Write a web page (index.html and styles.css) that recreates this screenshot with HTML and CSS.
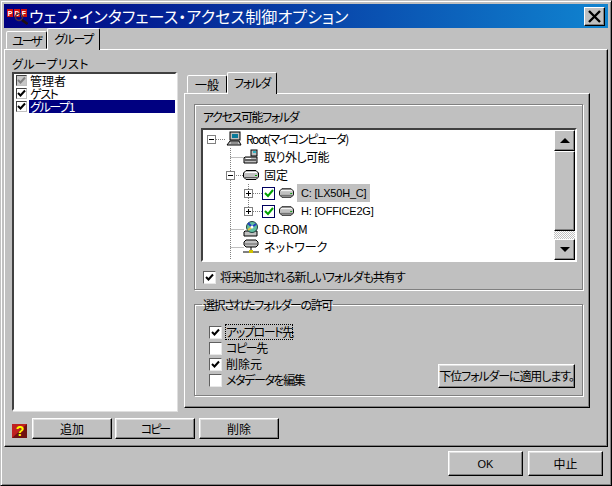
FILE: index.html
```html
<!DOCTYPE html>
<html lang="ja">
<head>
<meta charset="utf-8">
<title>ウェブ・インタフェース・アクセス制御オプション</title>
<link rel="stylesheet" href="styles.css">
</head>
<body>
<svg class="defs" width="0" height="0" aria-hidden="true">
  <symbol id="drive" viewBox="0 0 16 12">
    <path d="M3 1.500h10l2.500 2.500v4L13 10.500H3L.5 8V4z" fill="#c0c0c0" stroke="#000"/>
    <path d="M2 3.500h12" stroke="#fff"/>
    <path d="M2 8.500h12" stroke="#606060"/>
    <rect x="12" y="6" width="2" height="1" fill="#00a000"/>
  </symbol>
</svg>
<div class="window">
  <header class="titlebar">
    <svg class="logo" width="21" height="17" viewBox="0 0 21 17">
      <rect x="0" y="1" width="6" height="8" fill="#d01010"/>
      <rect x="7" y="1" width="6" height="8" fill="#d01010"/>
      <rect x="14" y="1" width="6" height="8" fill="#d01010"/>
      <text x="3" y="8" class="logo-t">P</text>
      <text x="10" y="8" class="logo-t">D</text>
      <text x="17" y="8" class="logo-t">F</text>
      <circle cx="12" cy="9" r="3.500" fill="none" stroke="#503040" stroke-width="1.500"/>
      <path d="M15 12l5.500 4" stroke="#201010" stroke-width="2.500"/>
    </svg>
    <span class="title-text">ウェブ・インタフェース・アクセス制御オプション</span>
    <button class="close" aria-label="閉じる">
      <svg width="13" height="13" viewBox="0 0 13 13"><path d="M1 1l11 11M12 1L1 12" stroke="#000" stroke-width="2.400"/></svg>
    </button>
  </header>

  <nav class="tabs outer-tabs">
    <span class="tab"><span class="ls-20">ユーザ</span></span>
    <span class="tab active"><span class="ls-15">グループ</span></span>
  </nav>

  <section class="pane outer-pane">
    <div class="columns">
      <div class="list-col">
        <div class="list-label">グループリスト</div>
        <ul class="listbox">
          <li class="list-row"><span class="lcheck grey"><svg width="9" height="9" viewBox="0 0 9 9"><path d="M1 4l2.500 2.500L8 1.500" fill="none" stroke="#808080" stroke-width="2"/></svg></span><span class="list-text">管理者</span></li>
          <li class="list-row"><span class="lcheck"><svg width="9" height="9" viewBox="0 0 9 9"><path d="M1 4l2.500 2.500L8 1.500" fill="none" stroke="#000" stroke-width="2"/></svg></span><span class="list-text ls-15">ゲスト</span></li>
          <li class="list-row"><span class="lcheck"><svg width="9" height="9" viewBox="0 0 9 9"><path d="M1 4l2.500 2.500L8 1.500" fill="none" stroke="#000" stroke-width="2"/></svg></span><span class="list-text selected ls-15">グループ1</span></li>
        </ul>
      </div>

      <div class="detail-col">
        <nav class="tabs inner-tabs">
          <span class="tab">一般</span>
          <span class="tab active"><span class="ls-15">フォルダ</span></span>
        </nav>
        <div class="pane inner-pane">
          <div class="group">
            <div class="group-label ls-15">アクセス可能フォルダ</div>
            <div class="treebox">
              <div class="tree">
                <svg class="connectors" width="351" height="130" viewBox="0 0 351 130">
                  <path d="M13 9.500h10M27.500 18v112M27.500 27.500h13M31 45.500h9M27.500 99.500h13M27.500 117.500h13M45.500 54v27M50 63.500h9M50 81.500h9" fill="none" stroke="#808080" stroke-dasharray="1 1"/>
                </svg>
                <div class="row lv0">
                  <span class="exp minus"></span>
                  <svg class="ico" width="16" height="16" viewBox="0 0 16 16">
                    <rect x="4" y="1" width="10" height="8" fill="#c0c0c0" stroke="#000"/>
                    <rect x="6" y="3" width="6" height="4" fill="#0a7a9a"/>
                    <path d="M1 14l3-4h9l2 4z" fill="#c0c0c0" stroke="#000"/>
                    <path d="M5 12h7" stroke="#606060"/>
                  </svg>
                  <span class="node-text ls-15">Root(マイコンピュータ)</span>
                </div>
                <div class="row lv1 noexp">
                  <svg class="ico" width="16" height="16" viewBox="0 0 16 16">
                    <rect x="8" y="1" width="6" height="6" fill="#c0c0c0" stroke="#000"/>
                    <rect x="10" y="2" width="3" height="2" fill="#30b0c0"/>
                    <path d="M2 8h12v6H1V9z" fill="#c0c0c0" stroke="#000"/>
                    <path d="M2 11h11" stroke="#000"/>
                    <rect x="3" y="9" width="5" height="1" fill="#fff"/>
                  </svg>
                  <span class="node-text ls-05">取り外し可能</span>
                </div>
                <div class="row lv1">
                  <span class="exp minus"></span>
                  <svg class="ico" width="16" height="12" viewBox="0 0 16 12"><use href="#drive"/></svg>
                  <span class="node-text">固定</span>
                </div>
                <div class="row lv2">
                  <span class="exp plus"></span>
                  <span class="tcheck"><svg width="10" height="9" viewBox="0 0 10 9"><path d="M1 4l3 3 5-6" fill="none" stroke="#00a000" stroke-width="2"/></svg></span>
                  <svg class="ico" width="15" height="12" viewBox="0 0 16 12"><use href="#drive"/></svg>
                  <span class="node-text drive selected-grey">C: [LX50H_C]</span>
                </div>
                <div class="row lv2">
                  <span class="exp plus"></span>
                  <span class="tcheck"><svg width="10" height="9" viewBox="0 0 10 9"><path d="M1 4l3 3 5-6" fill="none" stroke="#00a000" stroke-width="2"/></svg></span>
                  <svg class="ico" width="15" height="12" viewBox="0 0 16 12"><use href="#drive"/></svg>
                  <span class="node-text drive">H: [OFFICE2G]</span>
                </div>
                <div class="row lv1 noexp">
                  <svg class="ico" width="16" height="16" viewBox="0 0 16 16">
                    <path d="M2 10h12v5H1v-4z" fill="#c0c0c0" stroke="#000"/>
                    <circle cx="9" cy="6" r="5.500" fill="#60c0a0" stroke="#204040"/>
                    <path d="M9 6L5 2M9 6l4-3" stroke="#2040c0" stroke-width="2"/>
                    <path d="M9 6l-4 3" stroke="#e0c040" stroke-width="2"/>
                    <circle cx="9" cy="6" r="1.500" fill="#fff"/>
                  </svg>
                  <span class="node-text ls-05">CD-ROM</span>
                </div>
                <div class="row lv1 noexp">
                  <svg class="ico" width="16" height="16" viewBox="0 0 16 16">
                    <path d="M3 1h10l2 2v3l-2 2H3L1 6V3z" fill="#c0c0c0" stroke="#000"/>
                    <path d="M2 5h12" stroke="#606060"/>
                    <path d="M8 8v4M0 13h16" stroke="#000"/>
                    <rect x="6" y="11" width="4" height="3" fill="#d0c000"/>
                  </svg>
                  <span class="node-text">ネットワーク</span>
                </div>
              </div>
              <div class="scrollbar">
                <button class="sb-btn" aria-label="上"><span class="arrow up"></span></button>
                <div class="sb-thumb"></div>
                <div class="sb-track"></div>
                <button class="sb-btn" aria-label="下"><span class="arrow down"></span></button>
              </div>
            </div>
            <label class="check share">
              <span class="box"><svg width="9" height="9" viewBox="0 0 9 9"><path d="M1 4l2.500 2.500L8 1.500" fill="none" stroke="#000" stroke-width="2"/></svg></span>
              <span class="ls-10">将来追加される新しいフォルダも共有す</span>
            </label>
          </div>

          <fieldset class="perm">
            <legend class="ls-15">選択されたフォルダーの許可</legend>
            <div class="perm-body">
              <div class="perm-list">
                <label class="check">
                  <span class="box"><svg width="9" height="9" viewBox="0 0 9 9"><path d="M1 4l2.500 2.500L8 1.500" fill="none" stroke="#000" stroke-width="2"/></svg></span>
                  <span class="focus ls-15">アップロード先</span>
                </label>
                <label class="check"><span class="box"></span><span class="ls-15">コピー先</span></label>
                <label class="check">
                  <span class="box"><svg width="9" height="9" viewBox="0 0 9 9"><path d="M1 4l2.500 2.500L8 1.500" fill="none" stroke="#000" stroke-width="2"/></svg></span>
                  <span>削除元</span>
                </label>
                <label class="check"><span class="box"></span><span class="ls-15">メタデータを編集</span></label>
              </div>
              <button class="btn apply ls-10">下位フォルダーに適用します。</button>
            </div>
          </fieldset>
        </div>
      </div>
    </div>

    <div class="actions">
      <svg class="help" width="15" height="14" viewBox="0 0 15 14">
        <rect width="15" height="14" fill="#c02020"/>
        <path d="M0 14L15 0v14z" fill="#701010"/>
        <text x="8" y="12" class="help-t">?</text>
      </svg>
      <button class="btn act">追加</button>
      <button class="btn act ls-20">コピー</button>
      <button class="btn act last">削除</button>
    </div>
  </section>

  <footer class="footer">
    <button class="btn foot ok">OK</button>
    <button class="btn foot">中止</button>
  </footer>
</div>
</body>
</html>
```
FILE: styles.css
```css
* { box-sizing: border-box; }
html, body { margin: 0; padding: 0; }
body {
  width: 612px;
  height: 486px;
  overflow: hidden;
  background: #c0c0c0;
  font-family: "Noto Sans CJK JP", "Liberation Sans", sans-serif;
  font-size: 12px;
  line-height: 14px;
  color: #000;
  font-feature-settings: "palt";
}
.defs { display: block; height: 0; }

.ls-05 { letter-spacing: -0.5px; }
.ls-10 { letter-spacing: -1px; }
.ls-15 { letter-spacing: -1.4px; }
.ls-20 { letter-spacing: -2px; }

.window {
  width: 612px;
  height: 486px;
  background: #c0c0c0;
  border: 1px solid;
  border-color: #c0c0c0 #000 #000 #c0c0c0;
  box-shadow: inset 1px 1px 0 #fff, inset -1px -1px 0 #808080;
  padding: 3px;
  display: flex;
  flex-direction: column;
}

.titlebar {
  height: 24px;
  flex: none;
  display: flex;
  align-items: center;
  padding: 0 3px 0 3px;
  background: linear-gradient(90deg, #000080, #1084d0);
  color: #fff;
}
.logo { flex: none; margin-right: 1px; }
.logo-t { font: bold 7px "Liberation Sans", sans-serif; fill: #fff; text-anchor: middle; }
.title-text { font-size: 16px; letter-spacing: 0.15px; line-height: 24px; flex: 1; white-space: nowrap; }
.close {
  flex: none;
  width: 21px;
  height: 19px;
  padding: 0;
  display: flex;
  align-items: center;
  justify-content: center;
  background: #c0c0c0;
  border: 1px solid;
  border-color: #fff #000 #000 #fff;
  box-shadow: inset -1px -1px 0 #808080;
}

.tabs { display: flex; align-items: flex-end; flex: none; position: relative; z-index: 1; }
.tab {
  display: block;
  height: 18px;
  padding: 2px 0 0;
  text-align: center;
  background: #c0c0c0;
  border: 1px solid;
  border-color: #fff #000 transparent #fff;
  border-radius: 2px 2px 0 0;
  white-space: nowrap;
}
.tab.active { height: 22px; padding-top: 3px; margin-bottom: -1px; border-bottom: 0; }
.outer-tabs { height: 21px; padding-left: 2px; }
.outer-tabs .tab { width: 41px; }
.outer-tabs .tab.active { width: 53px; }
.inner-tabs { height: 21px; padding-left: 3px; }
.inner-tabs .tab { width: 40px; }
.inner-tabs .tab.active { width: 50px; }

.pane {
  background: #c0c0c0;
  border: 1px solid;
  border-color: #fff #000 #000 #fff;
  box-shadow: inset -1px -1px 0 #808080;
}
.outer-pane {
  width: 604px;
  height: 398px;
  flex: none;
  padding: 8px 0 0 7px;
}

.columns { display: flex; gap: 7px; height: 353px; }
.list-col { width: 165px; flex: none; }
.list-label { height: 14px; letter-spacing: 0.4px; margin-top: -1px; margin-bottom: 1px; }
.listbox {
  list-style: none;
  margin: 0;
  padding: 0;
  height: 339px;
  background: #fff;
  border: 2px solid;
  border-color: #404040 #fff #fff #404040;
  box-shadow: 1px 1px 0 #dfdfdf;
}
.list-row { display: flex; height: 13px; align-items: center; padding-left: 2px; line-height: 13px; }
.lcheck {
  width: 11px;
  height: 11px;
  flex: none;
  margin-right: 2px;
  display: flex;
  align-items: center;
  justify-content: center;
  background: #fff;
  border: 1px solid;
  border-color: #404040 #c0c0c0 #c0c0c0 #404040;
}
.lcheck.grey { background: #c8c8c8; }
.list-text { flex: 1; height: 13px; padding-left: 1px; }
.list-text.selected { background: #000080; color: #fff; }

.detail-col { width: 406px; flex: none; padding-top: 14px; }
.inner-pane { height: 315px; padding: 10px 0 0 9px; }

.group {
  width: 389px;
  height: 186px;
  padding: 5px 5px 0 6px;
  border: 1px solid #808080;
  box-shadow: 1px 1px 0 #fff, inset 1px 1px 0 #fff;
}
.group-label { height: 14px; padding-left: 2px; }
.treebox {
  margin-top: 4px;
  height: 134px;
  width: 376px;
  display: flex;
  background: #fff;
  border: 2px solid;
  border-color: #404040 #fff #fff #404040;
  overflow: hidden;
}
.tree { flex: 1; height: 130px; overflow: hidden; position: relative; }
.connectors { position: absolute; left: 0; top: 0; }
.row { height: 18px; display: flex; align-items: center; white-space: nowrap; line-height: 18px; position: relative; }
.lv0 { padding-left: 4px; }
.lv1 { padding-left: 23px; }
.lv1.noexp { padding-left: 40px; }
.lv2 { padding-left: 41px; }
.exp {
  width: 9px;
  height: 9px;
  flex: none;
  position: relative;
  background: #fff;
  border: 1px solid #808080;
  margin-right: 8px;
}
.lv0 .exp { margin-right: 10px; }
.lv2 .exp { margin-right: 9px; }
.exp::before { content: ""; position: absolute; left: 1px; top: 3px; width: 5px; height: 1px; background: #000; }
.exp.plus::after { content: ""; position: absolute; left: 3px; top: 1px; width: 1px; height: 5px; background: #000; }
.ico { flex: none; margin-right: 4px; }
.lv1 .ico { margin-right: 5px; }
.lv2 .ico { margin-right: 3px; }
.tcheck {
  width: 13px;
  height: 13px;
  flex: none;
  margin-right: 4px;
  display: flex;
  align-items: center;
  justify-content: center;
  background: #fff;
  border: 1px solid #000060;
}
.node-text.drive { padding: 0 4px; height: 18px; font-family: "Liberation Sans", sans-serif; font-size: 11px; letter-spacing: -0.2px; }
.selected-grey { background: #c0c0c0; }

.scrollbar { width: 21px; flex: none; height: 130px; display: flex; flex-direction: column; }
.sb-btn, .sb-thumb {
  display: flex;
  align-items: center;
  justify-content: center;
  padding: 0;
  background: #c0c0c0;
  border: 1px solid;
  border-color: #fff #000 #000 #fff;
  box-shadow: inset -1px -1px 0 #808080;
  flex: none;
  width: 21px;
}
.sb-btn { height: 21px; }
.sb-thumb { height: 80px; }
.sb-track {
  height: 8px;
  flex: none;
  background: repeating-conic-gradient(#c0c0c0 0 25%, #fff 0 50%) 0 0 / 2px 2px;
}
.arrow { width: 0; height: 0; border-left: 5px solid transparent; border-right: 5px solid transparent; }
.arrow.up { border-bottom: 5px solid #000; }
.arrow.down { border-top: 5px solid #000; }

.check { display: flex; align-items: center; white-space: nowrap; }
.box {
  width: 13px;
  height: 13px;
  flex: none;
  display: flex;
  align-items: center;
  justify-content: center;
  background: #fff;
  border: 1px solid;
  border-color: #606060 #e8e8e8 #e8e8e8 #606060;
}
.share { margin-top: 8px; padding-left: 2px; height: 14px; gap: 4px; }

.perm {
  margin: 7px 0 0;
  padding: 0;
  width: 389px;
  height: 99px;
  min-width: 0;
  border: 1px solid #808080;
  box-shadow: 1px 1px 0 #fff, inset 1px 1px 0 #fff;
}
.perm legend { margin-left: 7px; padding: 0 1px; height: 15px; line-height: 15px; }
.perm-body {
  display: flex;
  justify-content: space-between;
  align-items: flex-end;
  padding: 14px 7px 0 14px;
  height: 76px;
}
.perm-list { display: flex; flex-direction: column; }
.perm-list .check { height: 16px; gap: 4px; }
.focus { outline: 1px dotted #000; outline-offset: 0; height: 14px; width: 66px; }

.btn {
  font: inherit;
  font-feature-settings: "palt";
  color: #000;
  padding: 0;
  background: #c0c0c0;
  border: 1px solid;
  border-color: #fff #000 #000 #fff;
  box-shadow: inset -1px -1px 0 #808080, inset 1px 1px 0 #dfdfdf;
  white-space: nowrap;
}
.btn.ls-10 { letter-spacing: -1.1px; }
.btn.ls-20 { letter-spacing: -2px; }
.apply { width: 137px; height: 24px; }

.actions { display: flex; align-items: center; margin-top: 7px; height: 21px; }
.help { flex: none; margin: 4px 5px 0 0; }
.help-t { font: bold 14px "Liberation Sans", sans-serif; fill: #ff0; text-anchor: middle; }
.act { width: 80px; height: 21px; margin-right: 3px; }
.act.last { margin-left: 1px; }

.footer { flex: 1; display: flex; justify-content: flex-end; gap: 5px; padding: 4px 5px 0 0; }
.foot { width: 75px; height: 25px; }
.foot.ok { font-family: "Liberation Sans", sans-serif; font-size: 11px; }
```
